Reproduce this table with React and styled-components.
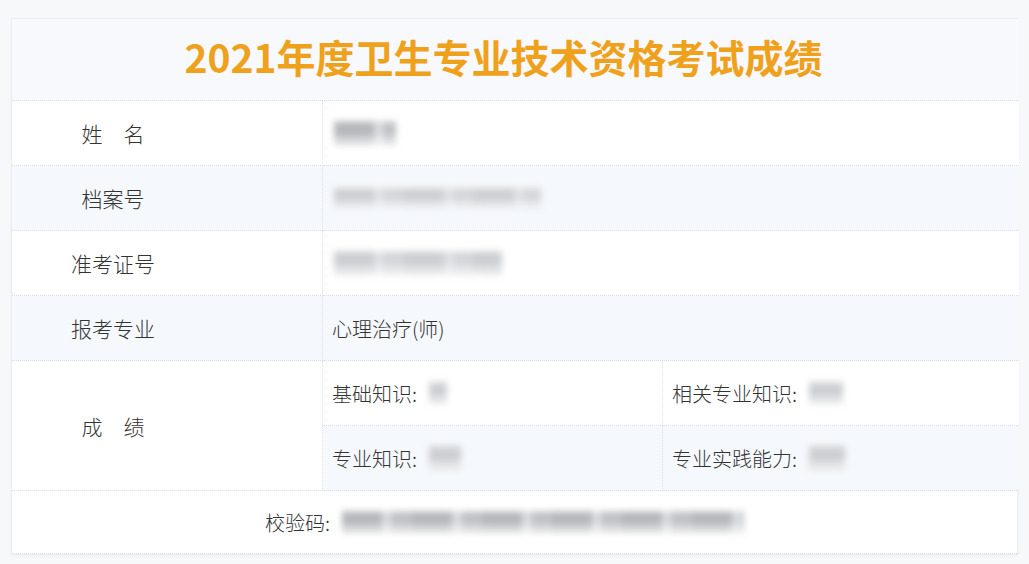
import styled, { createGlobalStyle } from 'styled-components';

const GlobalStyle = createGlobalStyle`
  html, body {
    margin: 0;
    padding: 0;
    background: #f7f8fa;
  }
  body {
    font-family: "Noto Sans CJK SC", "Noto Sans", sans-serif;
  }
`;

function App() {
  return (
    <>
      <GlobalStyle />
      <Page>
        <Card>
          <Title>2021年度卫生专业技术资格考试成绩</Title>

          <Label>姓　名</Label>
          <Value $span>
            <Redacted $w={62} $h={24} $dark />
          </Value>

          <Label $shaded>档案号</Label>
          <Value $span $shaded>
            <Redacted $w={207} $h={20} />
          </Value>

          <Label>准考证号</Label>
          <Value $span>
            <Redacted $w={168} $h={24} />
          </Value>

          <Label $shaded>报考专业</Label>
          <Value $span $shaded>心理治疗(师)</Value>

          <Label $tall>成　绩</Label>
          <Value>
            基础知识:<Redacted $w={18} $h={22} $gap />
          </Value>
          <Value $last>
            相关专业知识:<Redacted $w={34} $h={22} $gap />
          </Value>
          <Value $shaded>
            专业知识:<Redacted $w={32} $h={24} $gap />
          </Value>
          <Value $shaded $last>
            专业实践能力:<Redacted $w={36} $h={24} $gap />
          </Value>

          <Footer>
            校验码:<Redacted $w={402} $h={22} $gap $dark />
          </Footer>
        </Card>
      </Page>
    </>
  );
}

const Page = styled.div`
  width: 1029px;
  height: 564px;
  padding: 18px 11px 0 11px;
  box-sizing: border-box;
`;

const Card = styled.div`
  display: grid;
  grid-template-columns: 311px 340px 356px;
  grid-template-rows: 82px repeat(6, 65px) 63px;
  width: 1007px;
  background: #ffffff;
  border: 1px solid #e9ecf0;
  box-sizing: border-box;
  box-shadow: 0 1px 3px rgba(0, 0, 0, 0.03);
`;

const Title = styled.div`
  grid-column: 1 / -1;
  display: flex;
  align-items: center;
  justify-content: center;
  padding: 0 24px 8px 0;
  background: #f7f9fc;
  color: #f0a11c;
  font-size: 39px;
  font-weight: 700;
  border-bottom: 1px dotted #d9dde2;
`;

const Label = styled.div`
  grid-row: ${(p) => (p.$tall ? 'span 2' : 'auto')};
  display: flex;
  align-items: center;
  justify-content: center;
  padding-right: 108px;
  background: ${(p) => (p.$shaded ? '#f5f8fc' : '#ffffff')};
  color: #333333;
  font-size: 21px;
  font-weight: 300;
  border-bottom: 1px dotted #d9dde2;
  border-right: 1px dotted #dde1e6;
`;

const Value = styled.div`
  grid-column: ${(p) => (p.$span ? 'span 2' : 'auto')};
  display: flex;
  align-items: center;
  padding-left: 9px;
  background: ${(p) => (p.$shaded ? '#f5f8fc' : '#ffffff')};
  color: #333333;
  font-size: 20px;
  font-weight: 300;
  border-bottom: 1px dotted #d9dde2;
  border-right: ${(p) => (p.$span || p.$last ? 'none' : '1px dotted #dde1e6')};
`;

const Footer = styled.div`
  grid-column: 1 / -1;
  display: flex;
  align-items: center;
  justify-content: center;
  padding-right: 22px;
  color: #333333;
  font-size: 20px;
  font-weight: 300;
  border-bottom: 1px dotted #d9dde2;
`;

const Redacted = styled.span`
  display: inline-block;
  width: ${(p) => p.$w}px;
  height: ${(p) => p.$h}px;
  margin-left: ${(p) => (p.$gap ? '12px' : '2px')};
  background:
    linear-gradient(
      180deg,
      rgba(255, 255, 255, 0.2) 0%,
      rgba(255, 255, 255, 0) 45%,
      rgba(255, 255, 255, 0.55) 80%
    ),
    repeating-linear-gradient(
      90deg,
      ${(p) => (p.$dark ? '#b0b2b6' : '#c9cbce')} 0px,
      ${(p) => (p.$dark ? '#b0b2b6' : '#c9cbce')} 38px,
      #e2e4e7 44px,
      ${(p) => (p.$dark ? '#bbbdc0' : '#d1d3d6')} 52px,
      ${(p) => (p.$dark ? '#bbbdc0' : '#d1d3d6')} 70px
    );
  filter: blur(3px);
`;

export default App;
